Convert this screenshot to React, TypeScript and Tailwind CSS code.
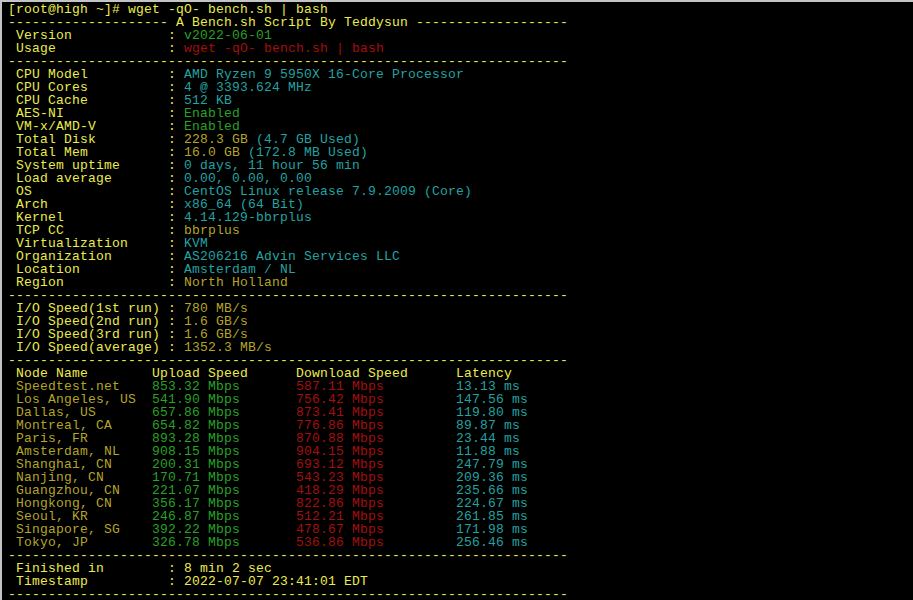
import React from 'react';

// terminal palette
const Y = 'text-[#ecec4c]';
const DY = 'text-[#b4a526]';
const C = 'text-[#22a3a3]';
const G = 'text-[#26a326]';
const R = 'text-[#a60e0e]';

type Seg = [string, string];

const dash = '-'.repeat(70);

const info: Seg[][] = [
  [[Y, ' CPU Model          : '], [C, 'AMD Ryzen 9 5950X 16-Core Processor']],
  [[Y, ' CPU Cores          : '], [C, '4 @ 3393.624 MHz']],
  [[Y, ' CPU Cache          : '], [C, '512 KB']],
  [[Y, ' AES-NI             : '], [G, 'Enabled']],
  [[Y, ' VM-x/AMD-V         : '], [G, 'Enabled']],
  [[Y, ' Total Disk         : '], [DY, '228.3 GB'], [C, ' (4.7 GB Used)']],
  [[Y, ' Total Mem          : '], [DY, '16.0 GB'], [C, ' (172.8 MB Used)']],
  [[Y, ' System uptime      : '], [C, '0 days, 11 hour 56 min']],
  [[Y, ' Load average       : '], [C, '0.00, 0.00, 0.00']],
  [[Y, ' OS                 : '], [C, 'CentOS Linux release 7.9.2009 (Core)']],
  [[Y, ' Arch               : '], [C, 'x86_64 (64 Bit)']],
  [[Y, ' Kernel             : '], [C, '4.14.129-bbrplus']],
  [[Y, ' TCP CC             : '], [DY, 'bbrplus']],
  [[Y, ' Virtualization     : '], [C, 'KVM']],
  [[Y, ' Organization       : '], [C, 'AS206216 Advin Services LLC']],
  [[Y, ' Location           : '], [C, 'Amsterdam / NL']],
  [[Y, ' Region             : '], [DY, 'North Holland']],
];

const io: Seg[][] = [
  [[Y, ' I/O Speed(1st run) : '], [DY, '780 MB/s']],
  [[Y, ' I/O Speed(2nd run) : '], [DY, '1.6 GB/s']],
  [[Y, ' I/O Speed(3rd run) : '], [DY, '1.6 GB/s']],
  [[Y, ' I/O Speed(average) : '], [DY, '1352.3 MB/s']],
];

const nodes = [
  ['Speedtest.net', '853.32', '587.11', '13.13'],
  ['Los Angeles, US', '541.90', '756.42', '147.56'],
  ['Dallas, US', '657.86', '873.41', '119.80'],
  ['Montreal, CA', '654.82', '776.86', '89.87'],
  ['Paris, FR', '893.28', '870.88', '23.44'],
  ['Amsterdam, NL', '908.15', '904.15', '11.88'],
  ['Shanghai, CN', '200.31', '693.12', '247.79'],
  ['Nanjing, CN', '170.71', '543.23', '209.36'],
  ['Guangzhou, CN', '221.07', '418.29', '235.66'],
  ['Hongkong, CN', '356.17', '822.86', '224.67'],
  ['Seoul, KR', '246.87', '512.21', '261.85'],
  ['Singapore, SG', '392.22', '478.67', '171.98'],
  ['Tokyo, JP', '326.78', '536.86', '256.46'],
];

const pad = (s: string, n: number) => s.padEnd(n, ' ');

function Line({ segs }: { segs: Seg[] }) {
  return (
    <div className="h-[13px] whitespace-pre">
      {segs.map(([cls, text], i) => (
        <span key={i} className={cls}>{text}</span>
      ))}
    </div>
  );
}

export default function App() {
  const lines: Seg[][] = [
    [[Y, '[root@high ~]# wget -qO- bench.sh | bash']],
    [[Y, '-------------------- A Bench.sh Script By Teddysun -------------------']],
    [[Y, ' Version            : '], [G, 'v2022-06-01']],
    [[Y, ' Usage              : '], [R, 'wget -qO- bench.sh | bash']],
    [[Y, dash]],
    ...info,
    [[Y, dash]],
    ...io,
    [[Y, dash]],
    [[Y, pad(' Node Name', 18) + pad('Upload Speed', 18) + pad('Download Speed', 20) + 'Latency']],
    ...nodes.map(([name, up, down, lat]): Seg[] => [
      [DY, pad(' ' + name, 18)],
      [G, pad(up + ' Mbps', 18)],
      [R, pad(down + ' Mbps', 20)],
      [C, lat + ' ms'],
    ]),
    [[Y, dash]],
    [[Y, ' Finished in        : 8 min 2 sec']],
    [[Y, ' Timestamp          : 2022-07-07 23:41:01 EDT']],
    [[Y, dash]],
  ];

  return (
    <div className="w-[913px] h-[600px] overflow-hidden bg-black border-t-[2px] border-l-[2px] border-[#c4c4c4]">
      <div className="pl-[6px] pt-[1px] font-['Liberation_Mono',monospace] text-[13px] leading-[13px] tracking-[0.2px]">
        {lines.map((segs, i) => (
          <Line key={i} segs={segs} />
        ))}
      </div>
    </div>
  );
}
